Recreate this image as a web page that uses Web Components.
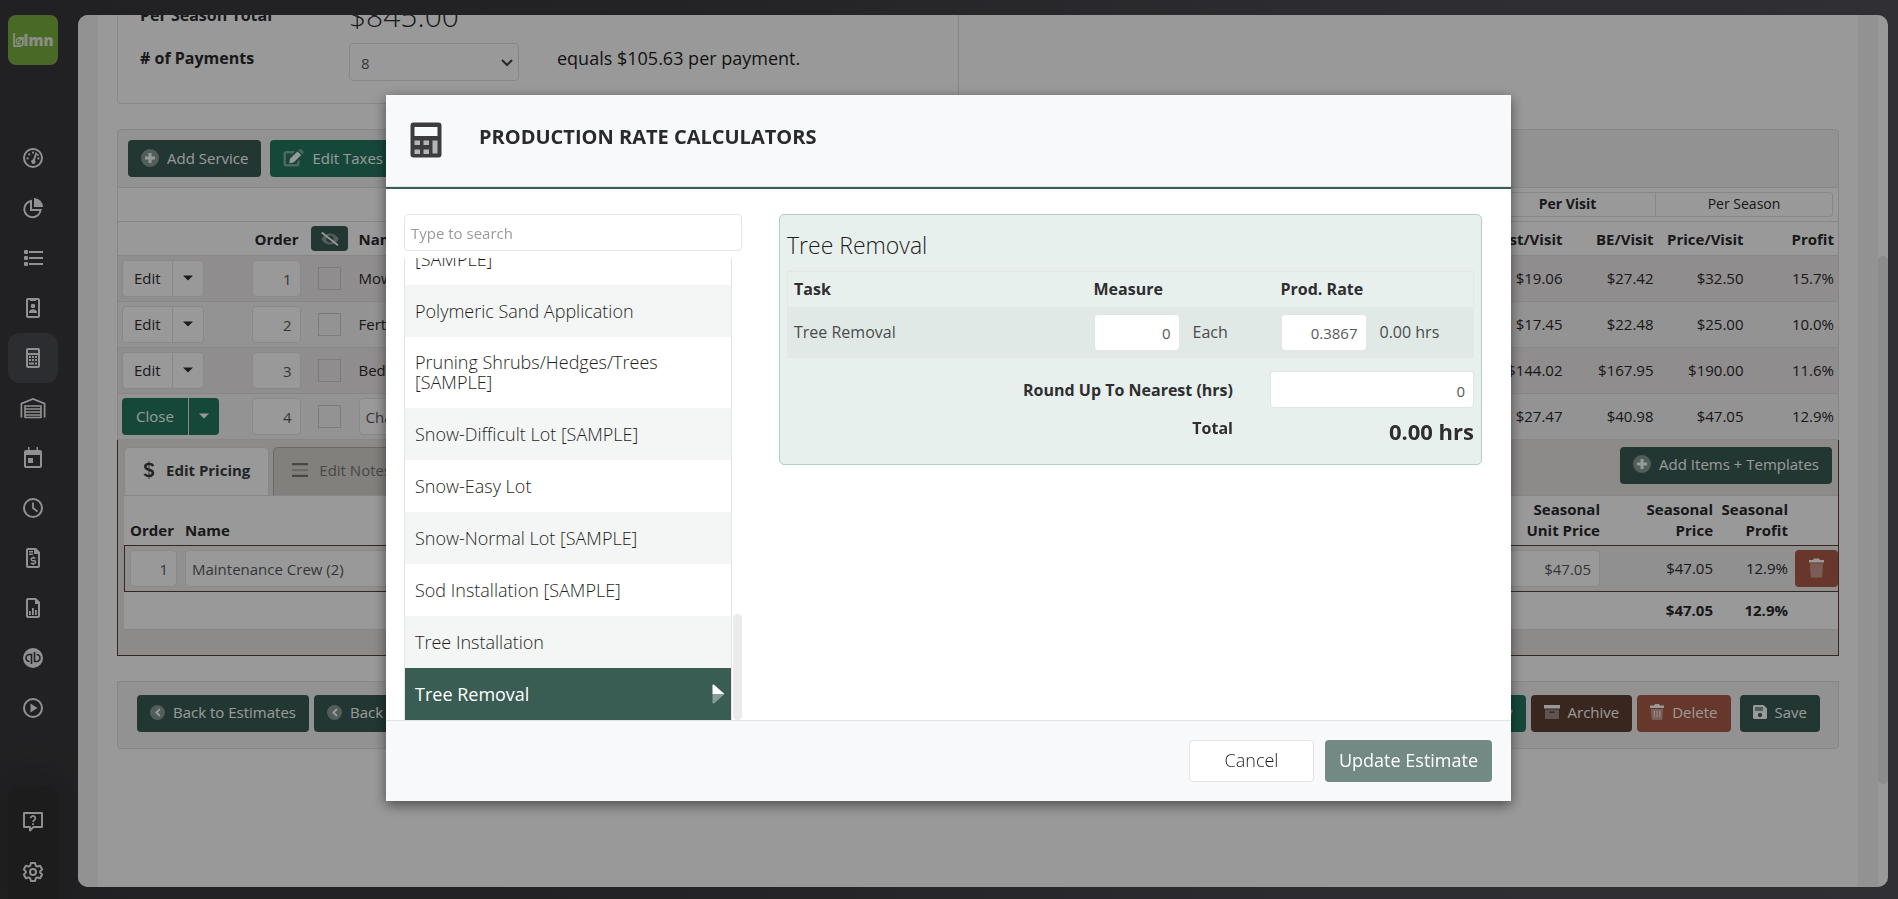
<!DOCTYPE html>
<html lang="en">
<head>
<meta charset="utf-8">
<title>Production Rate Calculators</title>
<style>
html, body { margin: 0; height: 100%; }
body { font: 300 16px/22px "Open Sans", "Noto Sans", sans-serif; color: #2e2e30; overflow: hidden; }
</style>
</head>
<body>
<app-shell>
  <nav-rail slot="nav"></nav-rail>
  <estimate-page></estimate-page>
</app-shell>
<calc-dialog></calc-dialog>

<script>
const define = (name, html, setup) => {
  const tpl = document.createElement('template');
  tpl.innerHTML = html;
  customElements.define(name, class extends HTMLElement {
    connectedCallback() {
      if (this.shadowRoot) return;
      this.attachShadow({ mode: 'open' }).append(tpl.content.cloneNode(true));
      if (setup) setup(this, this.shadowRoot);
    }
  });
};

/* Icons: [viewBox, markup, optional size]. Duotone layers use opacity. */
const ICONS = {
  gauge: ['0 0 24 24', '<circle cx="12" cy="12" r="9" fill="none" stroke="currentColor" stroke-width="2"/><path d="M14.6 6.2l1.7.7-2.4 7.3a2.1 2.1 0 1 1-1.8-.6z"/><circle cx="8.2" cy="8.4" r="1.1"/><circle cx="12" cy="6.6" r="1.1"/><circle cx="6.6" cy="12.4" r="1.1"/><circle cx="17.4" cy="12.4" r="1.1"/><circle cx="17" cy="9" r="1"/>'],
  pie: ['0 0 24 24', '<path d="M13 2v9h9a9 9 0 0 0-9-9z"/><path fill="none" stroke="currentColor" stroke-width="2" d="M10 5A8.2 8.2 0 1 0 19.6 14H10z"/>'],
  list: ['0 0 24 24', '<path d="M8 5h14v2H8zm0 6h14v2H8zm0 6h14v2H8z"/><rect x="3" y="4" width="4" height="4" rx="1"/><rect x="3" y="10" width="4" height="4" rx="1"/><rect x="3" y="16" width="4" height="4" rx="1"/>'],
  badge: ['0 0 24 24', '<path fill-rule="evenodd" d="M7 2h10a2 2 0 0 1 2 2v16a2 2 0 0 1-2 2H7a2 2 0 0 1-2-2V4a2 2 0 0 1 2-2zm0 2v16h10V4h-2v1H9V4z"/><circle cx="12" cy="10" r="2.3"/><path d="M8 17v-1.2c0-1.5 2.500-2.500 4-2.500s4 1 4 2.500V17z"/>'],
  calc: ['0 0 24 24', '<path fill-rule="evenodd" d="M7 2h10a2 2 0 0 1 2 2v16a2 2 0 0 1-2 2H7a2 2 0 0 1-2-2V4a2 2 0 0 1 2-2zm0 2v3h10V4zm0 5v11h10V9z"/><path d="M8 10h2v2H8zm3 0h2v2h-2zm3 0h2v2h-2zM8 13h2v2H8zm3 0h2v2h-2zm3 0h2v2h-2zM8 16.500h5v2H8zm6 0h2v2h-2z"/>'],
  garage: ['0 0 26 24', '<path fill="none" stroke="currentColor" stroke-width="1.700" d="M1.400 21.500V7.600L13 3l11.600 4.600v13.900"/><path fill="none" stroke="currentColor" stroke-width="1.600" d="M5 22V10h16v12M5 13h16M5 16h16M5 19h16M5 21.500h16"/>'],
  calendar: ['0 0 24 24', '<path fill-rule="evenodd" d="M7 1h1.500v3h7V1H17v3h2a2 2 0 0 1 2 2v14a2 2 0 0 1-2 2H5a2 2 0 0 1-2-2V6a2 2 0 0 1 2-2h2zM5 9v11h14V9z"/><rect x="7" y="12" width="5" height="5"/>'],
  clock: ['0 0 24 24', '<circle cx="12" cy="12" r="9" fill="none" stroke="currentColor" stroke-width="2"/><path fill="none" stroke="currentColor" stroke-width="1.800" d="M12 6.500V12l4.500 3.500"/>'],
  invoice: ['0 0 24 24', '<path fill-rule="evenodd" d="M7 2h8l4 4v14a2 2 0 0 1-2 2H7a2 2 0 0 1-2-2V4a2 2 0 0 1 2-2zm0 2v16h10V8h-4V4z"/><path d="M8 5h4v1.400H8zm0 2.500h4v1.400H8z"/><path fill="none" stroke="currentColor" stroke-width="1.500" d="M14.600 12h-3.100a1.200 1.200 0 0 0 0 2.700h1.800a1.200 1.200 0 0 1 0 2.700H9.800M12.200 10.500V12M12.200 17.400V19"/>'],
  report: ['0 0 24 24', '<path fill-rule="evenodd" d="M7 2h8l4 4v14a2 2 0 0 1-2 2H7a2 2 0 0 1-2-2V4a2 2 0 0 1 2-2zm0 2v16h10V8h-3V4z"/><path d="M8 15h1.800v4H8zm3-3h1.800v7H11zm3 2h1.800v5H14z"/>'],
  qb: ['0 0 24 24', '<circle cx="12" cy="12" r="10"/><path fill="none" stroke="#39393d" stroke-width="1.600" d="M10.500 18V8.500H8.500a3.500 3.500 0 0 0 0 7M13.500 6v9.500h2a3.500 3.500 0 0 0 0-7"/>'],
  play: ['0 0 24 24', '<circle cx="12" cy="12" r="9" fill="none" stroke="currentColor" stroke-width="2"/><path d="M9.500 7.500v9l7-4.500z"/>'],
  help: ['0 0 24 24', '<path fill="none" stroke="currentColor" stroke-width="1.900" stroke-linejoin="round" d="M3 3h18v14h-8.500L9 20.500V17H3z"/><path fill="none" stroke="currentColor" stroke-width="1.700" d="M9.700 8.200a2.300 2.300 0 1 1 3.600 1.900c-1 .7-1.300 1-1.300 2"/><path d="M11.100 13.200h1.800V15h-1.800z"/>'],
  gear: ['0 0 24 24', '<circle cx="12" cy="12" r="3" fill="none" stroke="currentColor" stroke-width="2"/><path fill="none" stroke="currentColor" stroke-width="2" stroke-linejoin="round" d="M9.900 3h4.200l.7 2.700 1.600.9 2.700-.8 2.100 3.600-2 2v1.200l2 2-2.100 3.600-2.700-.8-1.600.9-.7 2.700H9.900l-.7-2.700-1.600-.9-2.700.8-2.100-3.600 2-2v-1.200l-2-2 2.100-3.600 2.700.8 1.600-.9z"/>'],
  plus: ['0 0 18 18', '<circle cx="9" cy="9" r="9" opacity=".4"/><path d="M7.500 4h3v3.500H14v3h-3.500V14h-3v-3.500H4v-3h3.500z"/>'],
  edit: ['0 0 21 18', '<path opacity=".4" d="M12 2H3a2.500 2.500 0 0 0-2.500 2.500V15A2.500 2.500 0 0 0 3 17.500h11a2.500 2.500 0 0 0 2.500-2.500v-4.500L14 13v2H3V4.500h7z"/><path d="M14.500 2.500l3.700 3.600-7.600 7.300-4.300.8.7-4.400z"/><path opacity=".4" d="M15.500 1.500l1-1a1.500 1.500 0 0 1 2 0l1.600 1.700a1.500 1.500 0 0 1 0 2l-1 1z"/>'],
  eye: ['0 0 20 16', '<path opacity=".4" fill-rule="evenodd" d="M10 2.500c4 0 7 2.500 8.800 5.500-1.800 3-4.800 5.500-8.800 5.500S3 11 1.200 8C3 5 6 2.500 10 2.500zm0 2a3.500 3.500 0 1 0 0 7 3.500 3.500 0 0 0 0-7z"/><path d="M2.300.8l16.200 12.700-1.100 1.400L1.200 2.200z"/>'],
  back: ['0 0 16 16', '<circle cx="8" cy="8" r="8" opacity=".4"/><path d="M10 3.500L11.300 5l-3 3 3 3L10 12.500 5.300 8z"/>', [15, 15]],
  trash: ['0 0 18 20', '<path d="M1.500 2h4l1-1.500h5l1 1.500h4v2.500h-15z"/><path opacity=".4" d="M2.500 5.500h13L14.700 18a1.500 1.500 0 0 1-1.500 1.500H4.800A1.500 1.500 0 0 1 3.300 18z"/>', [19, 20]],
  bin: ['0.5 0 14 16', '<path d="M.5 1.500h4L5.500 0h4l1 1.500h4V4H.5z"/><path opacity=".4" d="M1.500 5h12l-.5 9.500a1.500 1.500 0 0 1-1.500 1.500h-8A1.500 1.500 0 0 1 2 14.500z"/><path opacity=".7" d="M4.200 6.500h1.300v7H4.200zm2.700 0h1.300v7H6.900zm2.700 0h1.300v7H9.600z"/>'],
  archive: ['0.5 0 16 16', '<path d="M.5 1h16v3.500H.5z"/><path opacity=".4" fill-rule="evenodd" d="M1.500 5.500h14V14a1 1 0 0 1-1 1h-12a1 1 0 0 1-1-1zm4.500 2V9h5V7.500z"/>'],
  save: ['1 1 14 14', '<path fill-rule="evenodd" d="M2.500 1h9L15 4.500v9a1.500 1.500 0 0 1-1.500 1.500h-11A1.500 1.500 0 0 1 1 13.500v-11A1.500 1.500 0 0 1 2.500 1zM3 3v4h8V3zm5 6a2.100 2.100 0 1 0 0 4.200A2.100 2.100 0 0 0 8 9z"/><path opacity=".4" d="M3 3h8v4H3z"/>'],
  dollar: ['0 0 12 18', '<path opacity=".4" d="M5 0h2v18H5z"/><path fill="none" stroke="currentColor" stroke-width="2.500" d="M10.300 5C9.500 3.700 8 3.100 6 3.100c-2.300 0-3.700 1-3.700 2.700 0 3.800 7.700 2.200 7.700 6.200 0 1.900-1.600 2.900-4 2.900-2.100 0-3.600-.7-4.600-2"/>'],
  bars: ['0 0 16 16', '<path d="M0 1h16v2.200H0zM0 12.800h16V15H0z"/><path opacity=".4" d="M0 7h16v2.200H0z"/>'],
  chevron: ['0 0 12 8', '<path fill="none" stroke="currentColor" stroke-width="2" d="M1 1l5 5 5-5"/>'],
  caret: ['0 0 10 6', '<path d="M0 .5h10L5 5.500z"/>'],
  pointer: ['0 0 13 20', '<path d="M.5 1.500Q.5 0 2 .8L12.500 10H.5z"/><path opacity=".4" d="M.5 10h12L2 19.400Q.5 20 .5 18.500z"/>'],
  calculator: ['0 0 32 36', '<path fill-rule="evenodd" d="M3.500.5h25a3 3 0 0 1 3 3v29a3 3 0 0 1-3 3h-25a3 3 0 0 1-3-3v-29a3 3 0 0 1 3-3zM4.500 5v9h23V5z"/><path fill="#b4b5b7" d="M4.500 18.500h5.500V23H4.500zm9 0H19V23h-5.500zm9 0h5v13h-5zm-18 9h5.500v4.500H4.500zm9 0H19v4.500h-5.500z"/>'],
  leaf: ['0 0 12 17', '<path fill="none" stroke="currentColor" stroke-width="2" d="M1 0v15h6.500a3.500 3.500 0 0 0 3.500-3.500V5.500H5.500"/><path fill="none" stroke="currentColor" stroke-width="1.500" d="M9.500 7.500A3.300 3.300 0 1 0 9 11.500M5.500 10.500L11 5"/>', [11, 15]]
};
customElements.define('app-icon', class extends HTMLElement {
  connectedCallback() {
    if (this.shadowRoot) return;
    const [box, body, size] = ICONS[this.getAttribute('name')];
    const [w, h] = size || box.split(' ').slice(2);
    this.attachShadow({ mode: 'open' }).innerHTML =
      `<style>:host{display:inline-flex;flex:none}svg{display:block;fill:currentColor}</style>
       <svg width="${w}" height="${h}" viewBox="${box}" aria-hidden="true">${body}</svg>`;
  }
});

define('app-shell', `
<style>
:host { display: flex; height: 100vh; box-sizing: border-box; padding: 15px 10px 12px 0;
  background: linear-gradient(90deg, #38383b 0, #3b3b3f 35%, #4d4c54 75%, #504f57); }
main { flex: 1; min-width: 0; display: flex; border-radius: 10px; overflow: hidden; background: #fff; }
.page { flex: 1; min-width: 0; overflow: hidden; border: solid #f3f3f3; border-width: 0 20px; }
.track { width: 10px; display: flex; flex-direction: column; }
.track i { margin-top: 241px; height: 528px; border-radius: 5px; background: #e9e9e9; }
</style>
<slot name="nav"></slot>
<main><div class="page"><slot></slot></div><div class="track"><i></i></div></main>`);

define('nav-rail', `
<style>
:host { width: 78px; flex: none; display: flex; margin-bottom: -12px; color: #f2f2f3; }
nav { flex: 1; display: flex; flex-direction: column; padding: 0 20px 0 8px; }
.logo { height: 50px; border-radius: 8px; background: #7ab141; display: flex; align-items: center; justify-content: center;
  font: 800 15px/20px "Open Sans", sans-serif; color: #e4ecd9; text-decoration: none; margin-bottom: 68px; }
a.item { height: 50px; display: flex; align-items: center; justify-content: center; color: inherit; border-radius: 12px; }
a.item[aria-current] { background: #4a4b52; }
.foot { margin-top: auto; height: 102px; padding-top: 10px; background: #2f2f30; border-radius: 10px 10px 0 0; box-shadow: 0 0 30px 10px rgba(30,30,30,.25); }
</style>
<nav aria-label="Main"><a class="logo" href="#" aria-label="lmn home"><app-icon name="leaf"></app-icon>lmn</a></nav>`,
(host, root) => {
  const nav = root.querySelector('nav');
  const link = (icon, label) => {
    const a = document.createElement('a');
    a.className = 'item'; a.href = '#'; a.setAttribute('aria-label', label);
    if (icon === 'calc') a.setAttribute('aria-current', 'page');
    a.innerHTML = `<app-icon name="${icon}"></app-icon>`;
    return a;
  };
  [['gauge', 'Dashboard'], ['pie', 'Budget'], ['list', 'Lists'], ['badge', 'Contacts'], ['calc', 'Estimates'], ['garage', 'Equipment'],
   ['calendar', 'Schedule'], ['clock', 'Time'], ['invoice', 'Invoices'], ['report', 'Reports'], ['qb', 'QuickBooks'], ['play', 'Videos']]
    .forEach(([i, l]) => nav.append(link(i, l)));
  const foot = document.createElement('div');
  foot.className = 'foot';
  foot.append(link('help', 'Help'), link('gear', 'Settings'));
  nav.append(foot);
});

define('ui-button', `
<style>
:host { display: inline-flex; flex: none; }
button { font: inherit; font-weight: 400; font-size: 15px; line-height: 20px; height: 37px; padding: 0 13px 2px; border: 0; border-radius: 4px; display: flex; align-items: center; gap: 8px; color: #fff; background: #3a5d53; white-space: nowrap; flex: 1; justify-content: center; }
:host([tone=green]) button { background: #257862; }
:host([tone=brown]) button { background: #5e4034; }
:host([tone=red]) button { background: #ab5d46; }
:host([tone=plain]) button { background: #fff; color: #2e2e30; border: 1px solid #e4e4e4; }
:host([tone=muted]) button { background: #738983; }
:host([size=large]) button { height: 42px; font-size: 18px; padding: 0 0 2px; }
:host([size=large][tone=plain]) button { font-weight: 300; color: #1e1e20; }
:host([size=mini]) button { height: 25px; padding: 0 8px; width: 37px; }
:host([size=square]) button { padding: 0 12px; }
:host([join=left]) button { border-radius: 4px 0 0 4px; padding: 0 14px; }
:host([join=left][tone=plain]) button { padding: 0 11px; }
:host([join=right]) button { border-radius: 0 4px 4px 0; border-left: 1px solid #dfe6e3; padding: 0 10px; }
:host([join=right][tone=plain]) button { border-left: 0; }
</style>
<button type="button"><slot></slot></button>`,
(host, root) => { const l = host.getAttribute('label'); if (l) root.querySelector('button').setAttribute('aria-label', l); });

define('ui-field', `
<style>
:host { display: block; }
input { font: inherit; font-weight: 400; font-size: 15px; color: #5a5a5c; box-sizing: border-box; width: 100%; height: 37px; padding: 2px 8px 0 6px; border: 1px solid #e4e4e4; border-radius: 4px; background: #fff; outline: 0; display: block; }
:host([num]) input { text-align: right; }
:host([type=search]) input { padding: 0 6px; }
input::placeholder { color: #9a9a9c; opacity: 1; }
</style>
<input type="text">`,
(host, root) => {
  const input = root.querySelector('input');
  input.value = host.getAttribute('value') || '';
  input.placeholder = host.getAttribute('placeholder') || '';
  input.setAttribute('aria-label', host.getAttribute('label'));
});

define('estimate-page', `
<style>
:host { display: block; padding: 0 19px; --line: #e2e2e2; --edge: #5e4034; color: #2a2a2c; }
b, th { font-weight: 700; }
.summary { box-sizing: border-box; width: 842px; max-width: 100%; height: 89px; overflow: hidden; display: flex; flex-direction: column; justify-content: flex-end; padding: 0 22px 22px; border: 1px solid var(--line); border-top: 0; border-radius: 0 0 4px 4px; font-size: 18px; }
.summary > div { display: grid; grid-template-columns: 209px 170px 1fr; }
.summary b { font-size: 16px; }
.season { height: 36px; align-items: end; margin-bottom: 12px; }
.season b { line-height: 32px; }
.season span { font-size: 30px; line-height: 30px; font-weight: 300; }
.pick { height: 38px; align-items: center; }
.pick label { font-weight: 700; font-size: 16px; padding-bottom: 8px; }
.pick > span:last-child { padding: 0 0 8px 38px; font-weight: 400; color: #1e1e20; }
.select { position: relative; display: flex; }
select { appearance: none; flex: 1; height: 38px; font: inherit; font-size: 15px; font-weight: 400; color: #5a5a5c; background: #fff; border: 1px solid var(--line); border-radius: 4px; padding: 2px 11px 0; }
.select app-icon { position: absolute; right: 6px; top: 16px; color: #444; }

.panel { margin-top: 25px; }
.bar { box-sizing: border-box; background: #f3f3f3; border: 1px solid var(--line); display: flex; align-items: flex-start; gap: 9px; }
.top { height: 59px; padding: 10px 10px 0; border-radius: 4px 4px 0 0; }
.bottom { margin-top: 25px; height: 68px; padding: 13px 18px 0 19px; gap: 5px; border-radius: 0 0 4px 4px; }
.bottom .gap { flex: 1; }
.bottom .last { margin-left: 4px; }
.switch { box-sizing: border-box; height: 34px; border: solid var(--line); border-width: 0 1px 1px; display: flex; justify-content: flex-end; padding: 4px 5px 0 0; }
.switch button { font: inherit; font-size: 14px; font-weight: 400; line-height: 20px; width: 177px; height: 25px; padding: 0 0 2px; color: inherit; background: #fff; border: 1px solid var(--line); }
.switch button:first-child { font-weight: 700; }
.switch button:last-child { border-left: 0; border-radius: 0 4px 4px 0; }
table { width: 100%; table-layout: fixed; border-collapse: collapse; font-size: 15px; font-weight: 400; }
td, th { padding: 0; text-align: right; white-space: nowrap; }
.items { border: solid var(--line); border-width: 0 1px; }
.items tr { height: 46px; border-bottom: 1px solid var(--line); }
.items thead tr { height: 33px; }
.items th { padding-top: 1px; }
.items tbody tr { background: #f6f6f6; }
.items tbody tr:nth-child(odd) { background: #efebeb; }
.items .l, .crew .l { text-align: left; }
.items td:nth-child(n+5), .items th:nth-child(n+5) { padding-right: 4px; }
.items th:nth-child(2) { padding-right: 2px; }
.items th:nth-child(3) { text-align: center; }
.items th ui-button { vertical-align: middle; }
.items ui-field { width: 49px; margin-left: auto; }
.split { display: inline-flex; margin-left: 4px; vertical-align: middle; }
input[type=checkbox] { appearance: none; display: block; width: 23px; height: 23px; margin: 0 auto; border: 1px solid #cfcfcf; }
.detail { border: 1px solid var(--edge); border-top: 0; background: #ebe8e4; padding: 7px 0 25px 6px; }
.tabs { display: flex; align-items: flex-end; height: 48px; gap: 4px; }
.tabs button { font: inherit; font-size: 15px; font-weight: 400; line-height: 20px; color: #7a7876; height: 48px; box-sizing: border-box; background: #d9d5cf; border: 1px solid #b5b1ae; border-bottom: 0; border-radius: 5px 5px 0 0; padding: 0 18px 3px; display: flex; align-items: center; gap: 11px; }
.tabs button:first-child { background: #fff; color: #3c3c3e; font-weight: 700; border-color: var(--line); }
.tabs .add { margin: 0 6px 11px auto; }
.crew { background: #fff; border-collapse: separate; border-spacing: 0; }
.crew th { height: 50px; line-height: 21px; vertical-align: bottom; padding-bottom: 4px; }
.crew th:first-child { padding-right: 3px; }
.crew thead th { border-top: 1px solid var(--line); box-sizing: border-box; }
.crew tbody td { height: 45px; background: #f0f0f0; border: solid var(--edge); border-width: 1px 0; }
.crew tbody td:first-child { border-left-width: 1px; }
.crew tfoot td { height: 37px; font-weight: 700; border-bottom: 1px solid var(--line); }
.crew .name { padding-left: 8px; }
.crew ui-field[label=Order] { width: 47px; margin-left: auto; }
</style>
<section class="summary">
  <div class="season"><b>Per Season Total</b><span>$845.00</span></div>
  <div class="pick"><label for="pay"># of Payments</label>
    <span class="select"><select id="pay"><option>8</option></select><app-icon name="chevron"></app-icon></span>
    <span>equals $105.63 per payment.</span></div>
</section>
<section class="panel">
  <div class="bar top"><ui-button><app-icon name="plus"></app-icon>Add Service</ui-button><ui-button tone="green"><app-icon name="edit"></app-icon>Edit Taxes</ui-button></div>
  <div class="switch"><button type="button">Per Visit</button><button type="button">Per Season</button></div>
  <table class="items">
    <colgroup><col style="width:129px"><col style="width:54px"><col style="width:58px"><col><col style="width:100px"><col style="width:91px"><col style="width:90px"><col style="width:91px"></colgroup>
    <thead><tr><th></th><th>Order</th><th><ui-button size="mini" label="Toggle visibility"><app-icon name="eye"></app-icon></ui-button></th><th class="l">Name</th><th>Cost/Visit</th><th>BE/Visit</th><th>Price/Visit</th><th>Profit</th></tr></thead>
    <tbody></tbody>
  </table>
  <div class="detail">
    <div class="tabs"><button type="button"><app-icon name="dollar"></app-icon>Edit Pricing</button><button type="button"><app-icon name="bars"></app-icon>Edit Notes</button>
      <ui-button class="add"><app-icon name="plus"></app-icon>Add Items + Templates</ui-button></div>
    <table class="crew">
      <colgroup><col style="width:53px"><col><col style="width:120px"><col style="width:113px"><col style="width:75px"><col style="width:50px"></colgroup>
      <thead><tr><th>Order</th><th class="l name">Name</th><th>Seasonal<br>Unit Price</th><th>Seasonal<br>Price</th><th>Seasonal<br>Profit</th><th></th></tr></thead>
      <tbody><tr><td><ui-field num value="1" label="Order"></ui-field></td><td class="name"><ui-field value="Maintenance Crew (2)" label="Name"></ui-field></td><td><ui-field num value="$47.05" label="Seasonal unit price"></ui-field></td><td>$47.05</td><td>12.9%</td><td><ui-button tone="red" size="square" label="Delete item"><app-icon name="trash"></app-icon></ui-button></td></tr></tbody>
      <tfoot><tr><td></td><td></td><td></td><td>$47.05</td><td>12.9%</td><td></td></tr></tfoot>
    </table>
  </div>
</section>
<footer class="bar bottom">
  <ui-button><app-icon name="back"></app-icon>Back to Estimates</ui-button>
  <ui-button><app-icon name="back"></app-icon>Back</ui-button>
  <span class="gap"></span>
  <ui-button tone="green">Copy</ui-button>
  <ui-button tone="brown"><app-icon name="archive"></app-icon>Archive</ui-button>
  <ui-button tone="red"><app-icon name="bin"></app-icon>Delete</ui-button>
  <ui-button class="last"><app-icon name="save"></app-icon>Save</ui-button>
</footer>`,
(host, root) => {
  const rows = [
    ['Mowing', '$19.06', '$27.42', '$32.50', '15.7%'],
    ['Fertilizing', '$17.45', '$22.48', '$25.00', '10.0%'],
    ['Bed Maintenance', '$144.02', '$167.95', '$190.00', '11.6%'],
    ['Change', '$27.47', '$40.98', '$47.05', '12.9%']
  ];
  root.querySelector('.items tbody').innerHTML = rows.map(([name, ...n], i) => {
    const open = i === 3, tone = open ? 'green' : 'plain';
    return `<tr><td class="l"><span class="split"><ui-button join="left" tone="${tone}">${open ? 'Close' : 'Edit'}</ui-button><ui-button join="right" tone="${tone}" label="More actions"><app-icon name="caret"></app-icon></ui-button></span></td>
      <td><ui-field num value="${i + 1}" label="Order"></ui-field></td><td><input type="checkbox" aria-label="Hide service"></td>
      <td class="l">${open ? `<ui-field style="width:auto" value="${name}" label="Name"></ui-field>` : name}</td>${n.map(v => `<td>${v}</td>`).join('')}</tr>`;
  }).join('');
});

define('rate-list', `
<style>
:host { display: flex; min-height: 0; }
ul { flex: 1; margin: 0; padding: 0; list-style: none; overflow: hidden; display: flex; flex-direction: column; justify-content: flex-end; border: solid #e4e4e4; border-width: 0 1px; }
li { flex: none; }
button { width: 100%; min-height: 52px; display: flex; align-items: center; justify-content: space-between; text-align: left; padding: 15px 6px 16px 10px; border: 0; background: #fff; font: inherit; font-size: 18px; line-height: 20px; font-weight: 300; color: #1e1e20; }
li:nth-child(even) button { background: #f4f6f6; }
li button[aria-pressed=true] { background: #3a5d53; color: #fff; font-weight: 400; }
.thumb { width: 9px; height: 106px; margin-left: 1px; border-radius: 5px; background: #ebebeb; align-self: flex-end; }
</style>
<ul></ul><div class="thumb"></div>`,
(host, root) => {
  root.querySelector('ul').innerHTML = ['Plant Installation [SAMPLE]', 'Polymeric Sand Application', 'Pruning Shrubs/Hedges/Trees [SAMPLE]', 'Snow-Difficult Lot [SAMPLE]', 'Snow-Easy Lot',
    'Snow-Normal Lot [SAMPLE]', 'Sod Installation [SAMPLE]', 'Tree Installation', 'Tree Removal']
    .map((t, i, all) => {
      const on = i === all.length - 1;
      const text = i === 0 || i === 2 ? t.replace(' [', '<br>[') : t;
      return `<li><button type="button" aria-pressed="${on}"><span>${text}</span>${on ? '<app-icon name="pointer"></app-icon>' : ''}</button></li>`;
    }).join('');
});

define('rate-form', `
<style>
:host { display: block; box-sizing: border-box; border: 1px solid #aed0c5; border-radius: 5px; background: #e8f0ed; padding: 18px 7px 28px; }
h3 { margin: 0 0 13px; font-size: 23px; line-height: 25px; font-weight: 300; color: #1e1e20; }
table { width: 100%; table-layout: fixed; border-collapse: collapse; border: 1px solid #e2e8e6; font-size: 16px; }
th, td { text-align: left; padding: 0 0 0 6px; font-weight: 400; }
td { color: #4a4c4c; }
th { height: 33px; font-weight: 700; padding-bottom: 2px; }
td { height: 50px; background: #e0e9e6; }
td div { display: flex; align-items: center; gap: 13px; }
td ui-field { width: 86px; }
.row { display: grid; grid-template-columns: 1fr 204px; column-gap: 37px; align-items: center; font-size: 16px; }
.row b { text-align: right; font-weight: 700; }
.round { margin: 13px 0 4px; height: 37px; }
.row strong { text-align: right; font-size: 22px; font-weight: 700; line-height: 26px; padding-top: 6px; }
.total { height: 24px; }
</style>
<h3>Tree Removal</h3>
<table>
  <colgroup><col><col style="width:187px"><col style="width:199px"></colgroup>
  <thead><tr><th>Task</th><th>Measure</th><th>Prod. Rate</th></tr></thead>
  <tbody><tr><td>Tree Removal</td><td><div><ui-field num value="0" label="Measure"></ui-field>Each</div></td><td><div><ui-field num value="0.3867" label="Prod. Rate"></ui-field>0.00 hrs</div></td></tr></tbody>
</table>
<div class="row round"><b>Round Up To Nearest (hrs)</b><ui-field num value="0" label="Round Up To Nearest (hrs)"></ui-field></div>
<div class="row total"><b>Total</b><strong>0.00 hrs</strong></div>`);

define('calc-dialog', `
<style>
:host { position: fixed; inset: 0; box-sizing: border-box; padding: 95px 1px 98px 0; display: flex; justify-content: center; background: rgba(0,0,0,.4); }
section { width: 1125px; max-width: 94vw; display: flex; flex-direction: column; background: #fff; box-shadow: 0 4px 12px rgba(0,0,0,.5); }
header { height: 92px; flex: none; display: flex; align-items: center; background: #f8f9fb; border-bottom: 2px solid #3a5d53; box-shadow: inset 0 -1px #e4e4e4; color: #3c3c3e; padding-left: 24px; }
header app-icon { margin: 0 37px 2px 0; }
h2 { margin: 0 0 8px; font-size: 20px; line-height: 26px; font-weight: 700; color: #2a2a2c; }
.body { flex: 1; min-height: 0; display: grid; grid-template-columns: 338px 1fr; column-gap: 37px; padding: 25px 29px 0 18px; align-items: stretch; }
.side { display: flex; flex-direction: column; gap: 7px; min-height: 0; }
rate-list { flex: 1; }
rate-form { align-self: start; }
footer { flex: none; height: 80px; border-top: 1px solid #e4e4e4; background: #f8f9fb; display: flex; justify-content: flex-end; align-items: center; gap: 11px; padding-right: 19px; }
footer ui-button:first-child { width: 125px; }
footer ui-button:last-child { width: 167px; }
</style>
<section role="dialog" aria-modal="true" aria-labelledby="title">
  <header><app-icon name="calculator"></app-icon><h2 id="title">PRODUCTION RATE CALCULATORS</h2></header>
  <div class="body">
    <div class="side"><ui-field type="search" placeholder="Type to search" label="Search calculators"></ui-field><rate-list></rate-list></div>
    <rate-form></rate-form>
  </div>
  <footer><ui-button size="large" tone="plain">Cancel</ui-button><ui-button size="large" tone="muted">Update Estimate</ui-button></footer>
</section>`);
</script>
</body>
</html>
